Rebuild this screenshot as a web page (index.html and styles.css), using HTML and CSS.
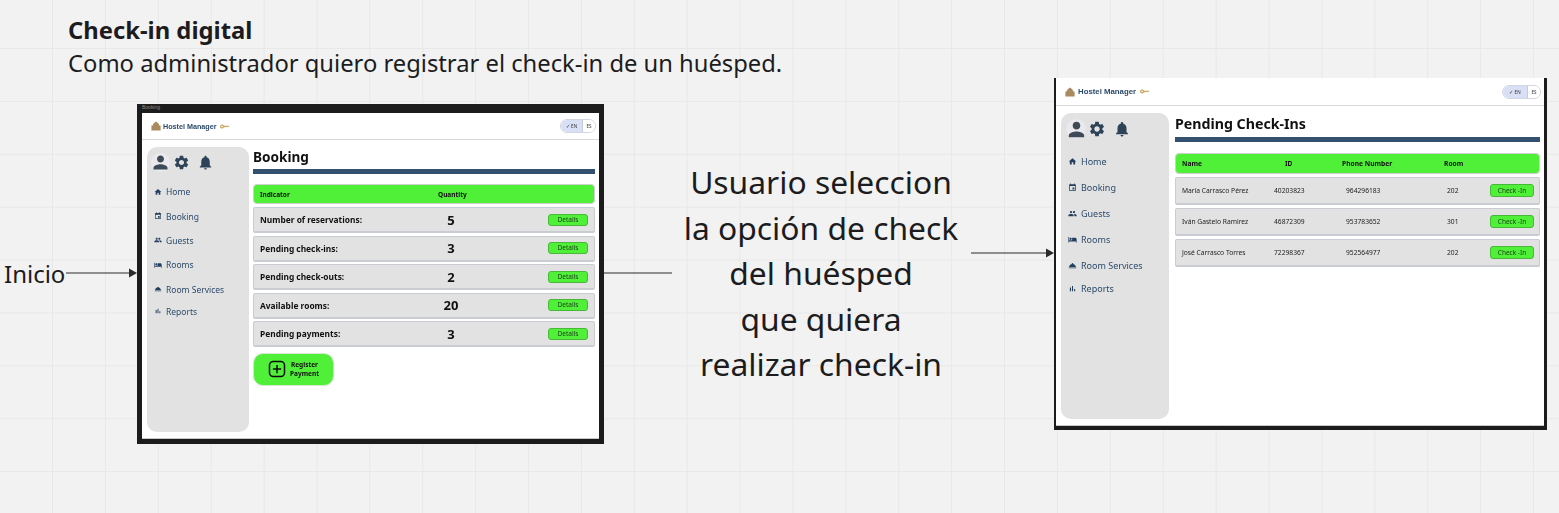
FILE: index.html
```html
<!DOCTYPE html>
<html lang="es">
<head>
    <meta charset="UTF-8">
    <title>Check-in digital</title>
    <link rel="stylesheet" href="styles.css">
</head>
<body>
<svg class="icon-defs" width="0" height="0" aria-hidden="true">
    <symbol id="i-person" viewBox="0 0 24 24"><path d="M12 12c2.21 0 4-1.790 4-4s-1.790-4-4-4-4 1.790-4 4 1.790 4 4 4zm0 2c-2.670 0-8 1.340-8 4v2h16v-2c0-2.660-5.330-4-8-4z"/></symbol>
    <symbol id="i-gear" viewBox="0 0 24 24"><path d="M19.14 12.94c.04-.3.06-.61.06-.94 0-.32-.02-.64-.07-.94l2.03-1.58c.18-.14.23-.41.12-.61l-1.92-3.32c-.12-.22-.37-.29-.59-.22l-2.39.96c-.5-.38-1.03-.7-1.62-.94l-.36-2.54c-.04-.24-.24-.41-.48-.41h-3.84c-.24 0-.43.17-.47.41l-.36 2.54c-.59.24-1.13.57-1.62.94l-2.39-.96c-.22-.08-.47 0-.59.22L2.74 8.87c-.12.21-.08.47.12.61l2.03 1.58c-.05.3-.09.63-.09.94s.02.64.07.94l-2.03 1.58c-.18.14-.23.41-.12.61l1.92 3.32c.12.22.37.29.59.22l2.39-.96c.5.38 1.03.7 1.62.94l.36 2.54c.05.24.24.41.48.41h3.84c.24 0 .44-.17.47-.41l.36-2.54c.59-.24 1.13-.56 1.62-.94l2.39.96c.22.08.47 0 .59-.22l1.92-3.32c.12-.22.07-.47-.12-.61l-2.01-1.58zM12 15.6c-1.98 0-3.6-1.62-3.6-3.6s1.62-3.6 3.6-3.6 3.6 1.62 3.6 3.6-1.62 3.6-3.6 3.6z"/></symbol>
    <symbol id="i-bell" viewBox="0 0 24 24"><path d="M12 22c1.1 0 2-.9 2-2h-4c0 1.1.89 2 2 2zm6-6v-5c0-3.07-1.64-5.64-4.5-6.32V4c0-.83-.67-1.5-1.5-1.5s-1.5.67-1.5 1.5v.68C7.63 5.36 6 7.92 6 11v5l-2 2v1h16v-1l-2-2z"/></symbol>
    <symbol id="i-home" viewBox="0 0 24 24"><path d="M10 20v-6h4v6h5v-8h3L12 3 2 12h3v8z"/></symbol>
    <symbol id="i-event" viewBox="0 0 24 24"><path d="M17 12h-5v5h5v-5zM16 1v2H8V1H6v2H5c-1.11 0-1.99.9-1.99 2L3 19c0 1.1.89 2 2 2h14c1.1 0 2-.9 2-2V5c0-1.1-.9-2-2-2h-1V1h-2zm3 18H5V8h14v11z"/></symbol>
    <symbol id="i-people" viewBox="0 0 24 24"><path d="M16 11c1.66 0 2.99-1.34 2.99-3S17.66 5 16 5c-1.66 0-3 1.34-3 3s1.34 3 3 3zm-8 0c1.66 0 2.99-1.34 2.99-3S9.66 5 8 5C6.34 5 5 6.34 5 8s1.34 3 3 3zm0 2c-2.33 0-7 1.17-7 3.5V19h14v-2.5c0-2.33-4.67-3.5-7-3.5zm8 0c-.29 0-.62.02-.97.05 1.16.84 1.97 1.97 1.97 3.45V19h6v-2.5c0-2.33-4.67-3.5-7-3.5z"/></symbol>
    <symbol id="i-bed" viewBox="0 0 24 24"><path d="M7 13c1.66 0 3-1.34 3-3S8.66 7 7 7s-3 1.34-3 3 1.34 3 3 3zm12-6h-8v7H3V5H1v15h2v-3h18v3h2v-9c0-2.21-1.79-4-4-4z"/></symbol>
    <symbol id="i-service" viewBox="0 0 24 24"><path d="M2 17h20v2H2zm11.84-9.21c.1-.24.16-.51.16-.79 0-1.1-.9-2-2-2s-2 .9-2 2c0 .28.06.55.16.79C6.25 8.6 3.27 11.93 3 16h18c-.27-4.07-3.25-7.4-7.16-8.21z"/></symbol>
    <symbol id="i-bars" viewBox="0 0 24 24"><path d="M5 9.2h3V19H5zM10.6 5h2.8v14h-2.800zm5.600 8H19v6h-2.800z"/></symbol>
    <symbol id="i-house" viewBox="0 0 24 24"><path d="M12 1 6 6 4 11H1v12h22V11h-3l-2-5z"/></symbol>
    <symbol id="i-key" viewBox="0 0 24 12"><path d="M5 1a5 5 0 1 0 4.6 7H13l1.5-1.5L16 8l1.500-1.500L19 8l4-3-1-1H9.600A5 5 0 0 0 5 1zm0 3a2 2 0 1 1 0 4 2 2 0 0 1 0-4z"/></symbol>
</svg>

<main class="board">
    <header class="story">
        <h1>Check-in digital</h1>
        <p>Como administrador quiero registrar el check-in de un huésped.</p>
    </header>

    <span class="start-label">Inicio</span>
    <svg class="arrow arrow-start" width="72" height="12"><path d="M0 6h65"/><polygon points="63,1.500 71,6 63,10.500"/></svg>
    <svg class="arrow arrow-line" width="68" height="12"><path d="M0 6h68"/></svg>
    <svg class="arrow arrow-next" width="84" height="12"><path d="M0 6h77"/><polygon points="75,1.500 83,6 75,10.500"/></svg>

    <p class="step-note">Usuario seleccion<br>la opción de check<br>del huésped<br>que quiera<br>realizar check-in</p>

    <!-- Booking screen -->
    <section class="frame frame-booking">
        <div class="frame-caption">Booking</div>
        <div class="screen">
            <div class="topbar">
                <div class="brand">
                    <svg class="brand-house"><use href="#i-house"/></svg>
                    <span>Hostel Manager</span>
                    <svg class="brand-key"><use href="#i-key"/></svg>
                </div>
                <div class="lang"><span class="lang-on">✓ EN</span><span class="lang-off">ES</span></div>
            </div>
            <div class="screen-body">
                <aside class="sidebar">
                    <div class="side-tools">
                        <span class="avatar"><svg><use href="#i-person"/></svg></span>
                        <svg class="tool-gear"><use href="#i-gear"/></svg>
                        <svg class="tool-bell"><use href="#i-bell"/></svg>
                    </div>
                    <nav class="side-nav">
                        <a><svg><use href="#i-home"/></svg>Home</a>
                        <a><svg><use href="#i-event"/></svg>Booking</a>
                        <a><svg><use href="#i-people"/></svg>Guests</a>
                        <a><svg><use href="#i-bed"/></svg>Rooms</a>
                        <a><svg><use href="#i-service"/></svg>Room Services</a>
                        <a class="nav-last"><svg><use href="#i-bars"/></svg>Reports</a>
                    </nav>
                </aside>
                <div class="content">
                    <h2>Booking</h2>
                    <div class="title-rule"></div>
                    <div class="table-head">
                        <span>Indicator</span>
                        <span class="cell-qty">Quantity</span>
                    </div>
                    <div class="row"><span class="row-name">Number of reservations:</span><span class="row-value">5</span><button class="btn-green">Details</button></div>
                    <div class="row"><span class="row-name">Pending check-ins:</span><span class="row-value">3</span><button class="btn-green">Details</button></div>
                    <div class="row"><span class="row-name">Pending check-outs:</span><span class="row-value">2</span><button class="btn-green">Details</button></div>
                    <div class="row"><span class="row-name">Available rooms:</span><span class="row-value">20</span><button class="btn-green">Details</button></div>
                    <div class="row"><span class="row-name">Pending payments:</span><span class="row-value">3</span><button class="btn-green">Details</button></div>
                    <button class="btn-register">
                        <svg viewBox="0 0 24 24"><rect x="2" y="2" width="20" height="20" rx="5"/><path d="M12 6.500v11M6.500 12h11"/></svg>
                        <span>Register<br>Payment</span>
                    </button>
                </div>
            </div>
        </div>
    </section>

    <!-- Pending check-ins screen -->
    <section class="frame frame-checkin">
        <div class="screen">
            <div class="topbar">
                <div class="brand">
                    <svg class="brand-house"><use href="#i-house"/></svg>
                    <span>Hostel Manager</span>
                    <svg class="brand-key"><use href="#i-key"/></svg>
                </div>
                <div class="lang"><span class="lang-on">✓ EN</span><span class="lang-off">ES</span></div>
            </div>
            <div class="screen-body">
                <aside class="sidebar">
                    <div class="side-tools">
                        <span class="avatar"><svg><use href="#i-person"/></svg></span>
                        <svg class="tool-gear"><use href="#i-gear"/></svg>
                        <svg class="tool-bell"><use href="#i-bell"/></svg>
                    </div>
                    <nav class="side-nav">
                        <a><svg><use href="#i-home"/></svg>Home</a>
                        <a><svg><use href="#i-event"/></svg>Booking</a>
                        <a><svg><use href="#i-people"/></svg>Guests</a>
                        <a><svg><use href="#i-bed"/></svg>Rooms</a>
                        <a><svg><use href="#i-service"/></svg>Room Services</a>
                        <a class="nav-last"><svg><use href="#i-bars"/></svg>Reports</a>
                    </nav>
                </aside>
                <div class="content">
                    <h2>Pending Check-Ins</h2>
                    <div class="title-rule"></div>
                    <div class="table-head head-cols">
                        <span>Name</span><span>ID</span><span>Phone Number</span><span>Room</span>
                    </div>
                    <div class="row guest-cols"><span>María Carrasco Pérez</span><span>40203823</span><span>964296183</span><span>202</span><button class="btn-green">Check -In</button></div>
                    <div class="row guest-cols"><span>Iván Gastelo Ramirez</span><span>46872309</span><span>953783652</span><span>301</span><button class="btn-green">Check -In</button></div>
                    <div class="row guest-cols"><span>José Carrasco Torres</span><span>72298367</span><span>952564977</span><span>202</span><button class="btn-green">Check -In</button></div>
                </div>
            </div>
        </div>
    </section>
</main>
</body>
</html>
```

FILE: styles.css
```css
* {
    box-sizing: border-box;
}

body {
    margin: 0;
    overflow: hidden;
    font-family: "Noto Sans", sans-serif;
    color: #1c1c1e;
    background-color: #f2f2f2;
}

.icon-defs {
    position: absolute;
}

/* Free canvas: everything placed on it sits at its own board position */
.board {
    position: relative;
    width: 1559px;
    height: 513px;
    overflow: hidden;
    background-color: #f2f2f2;
    background-image:
        linear-gradient(to right, #e8e8e8 1px, transparent 1px),
        linear-gradient(to bottom, #e8e8e8 1px, transparent 1px);
    background-size: 52.9px 52.9px;
    background-position: 52px 48px;
}

.story {
    position: absolute;
    left: 68px;
    top: 14px;
}

.story h1 {
    margin: 0;
    font-size: 23.8px;
    line-height: 32px;
    font-weight: 700;
}

.story p {
    margin: 0;
    font-size: 23.76px;
    line-height: 34px;
    white-space: nowrap;
}

.start-label {
    position: absolute;
    left: 4px;
    top: 258px;
    font-size: 24px;
    line-height: 32px;
}

.arrow {
    position: absolute;
}

.arrow path {
    fill: none;
    stroke: #2b2b2b;
    stroke-width: 1.2;
}

.arrow polygon {
    fill: #2b2b2b;
}

.arrow-start {
    left: 66px;
    top: 267px;
}

.arrow-line {
    left: 604px;
    top: 267px;
}

.arrow-next {
    left: 971px;
    top: 247px;
}

.step-note {
    position: absolute;
    left: 671px;
    top: 159px;
    width: 300px;
    margin: 0;
    font-size: 31.8px;
    line-height: 45.6px;
    text-align: center;
}

/* App screenshots */
.frame {
    position: absolute;
    display: flex;
    flex-direction: column;
    background-color: #1c1c1c;
}

.frame-booking {
    left: 137px;
    top: 104px;
    width: 467px;
    height: 340px;
    padding: 0 5px 5px 5px;
}

.frame-checkin {
    left: 1054px;
    top: 78px;
    width: 493px;
    height: 352px;
    padding: 0 3px 4px 2px;
}

.frame-caption {
    height: 9px;
    font-family: "Liberation Sans", sans-serif;
    font-size: 5px;
    line-height: 7px;
    color: #8a8a8a;
}

/* the pasted screens are soft, not crisp */
.screen {
    flex: 1;
    display: flex;
    flex-direction: column;
    background-color: #fff;
    border-bottom: 1px solid #c8c8c8;
    filter: blur(0.3px);
}

.topbar {
    display: flex;
    align-items: center;
    justify-content: space-between;
    height: 27px;
    padding: 0 3px 0 9px;
    border-bottom: 1px solid #d5d8dc;
}

.brand {
    display: flex;
    align-items: center;
    gap: 2px;
    font-family: "Liberation Sans", sans-serif;
    font-size: 7.2px;
    font-weight: 700;
    color: #2c4a6b;
}

.brand-house {
    width: 10px;
    height: 10px;
    fill: #a98a5f;
}

.brand-key {
    width: 10px;
    height: 5px;
    margin-left: 1px;
    fill: #c9a95c;
}

.lang {
    display: flex;
    height: 14px;
    width: 36px;
    border: 1px solid #d2d6e0;
    border-radius: 7px;
    overflow: hidden;
    font-size: 4.5px;
    line-height: 12px;
    color: #333;
}

.lang-on {
    flex: 1;
    text-align: center;
    background-color: #d9e0f5;
    border-right: 1px solid #c6cbd8;
}

.lang-off {
    width: 12px;
    text-align: center;
    background-color: #fff;
}

.screen-body {
    flex: 1;
    display: flex;
    min-height: 0;
}

.sidebar {
    flex: none;
    background-color: #e2e2e2;
    border-radius: 10px;
}

.side-tools {
    display: flex;
    align-items: center;
    fill: #2f4358;
}

.side-tools svg {
    flex: none;
}

.avatar {
    display: flex;
    align-items: center;
    justify-content: center;
    flex: none;
    border-radius: 50%;
    background-color: #e9e9ee;
}

.avatar svg {
    fill: #3f4a58;
}

.side-nav {
    display: flex;
    flex-direction: column;
}

.side-nav a {
    display: flex;
    align-items: center;
    color: #2c4a6b;
}

.side-nav svg {
    flex: none;
    fill: #24405e;
}

.content {
    flex: 1;
    min-width: 0;
    display: flex;
    flex-direction: column;
    align-items: stretch;
}

.content h2 {
    margin: 0;
    font-weight: 700;
    color: #111;
}

.title-rule {
    height: 5px;
    background-color: #34506f;
}

.table-head {
    display: flex;
    align-items: center;
    background-color: #50f038;
    border: 1px solid #d0d0d0;
    border-radius: 4px;
    font-weight: 700;
    color: #111;
}

.row {
    display: flex;
    align-items: center;
    background-color: #e2e2e2;
    border: 1px solid #c9ccd2;
    border-bottom-width: 2px;
    border-radius: 2px;
}

.btn-green {
    padding: 0;
    background-color: #50f038;
    border: 1px solid #48b838;
    border-radius: 3px;
    font-family: "Noto Sans", sans-serif;
    color: #1d3a1d;
}

/* Booking screen sizes */
.frame-booking .screen-body {
    padding: 7px 4px 6px 5px;
    gap: 4px;
}

.frame-booking .sidebar {
    width: 102px;
    padding: 6px 5px 0 4px;
}

.frame-booking .avatar {
    width: 19px;
    height: 19px;
}

.frame-booking .side-tools svg {
    width: 17px;
    height: 17px;
}

.frame-booking .avatar svg {
    width: 21px;
    height: 21px;
}

.frame-booking .tool-gear {
    margin-left: 3px;
}

.frame-booking .tool-bell {
    margin-left: 7px;
}

.frame-booking .side-nav {
    margin-top: 7.5px;
    padding-left: 3px;
}

.frame-booking .side-nav a {
    height: 24.4px;
    gap: 4px;
    font-size: 8.5px;
}

.frame-booking .side-nav a.nav-last {
    height: 20px;
}

.frame-booking .side-nav svg {
    width: 8px;
    height: 8px;
}

.frame-booking h2 {
    font-size: 13.6px;
    line-height: 20px;
    margin-bottom: 2px;
}

.frame-booking .title-rule {
    margin-bottom: 10px;
}

.frame-booking .table-head {
    height: 20px;
    margin-bottom: 3px;
    padding-left: 6px;
    font-size: 6.5px;
}

.frame-booking .table-head span:first-child {
    width: 178px;
}

.frame-booking .row {
    height: 26px;
    margin-bottom: 2.6px;
    padding: 0 6px;
    font-size: 8.4px;
}

.frame-booking .row-name {
    width: 166px;
    font-weight: 700;
    color: #111;
}

.frame-booking .row-value {
    width: 50px;
    text-align: center;
    font-size: 13px;
    font-weight: 700;
    color: #111;
}

.frame-booking .btn-green {
    width: 40px;
    height: 12px;
    margin-left: auto;
    font-size: 6.5px;
    line-height: 10px;
}

.btn-register {
    display: flex;
    align-items: center;
    justify-content: center;
    gap: 4px;
    width: 81px;
    height: 33px;
    margin-top: 3px;
    padding: 0;
    background-color: #50f038;
    border: 1px solid #d4e8d0;
    border-radius: 10px;
    font-family: "Noto Sans", sans-serif;
    font-size: 6.5px;
    line-height: 9px;
    font-weight: 700;
    color: #111;
}

.btn-register svg {
    width: 18px;
    height: 18px;
    fill: none;
    stroke: #0c0c0c;
    stroke-width: 2;
}

/* Check-in screen sizes */
.frame-checkin .topbar {
    height: 28px;
}

.frame-checkin .brand {
    gap: 3px;
    font-size: 7.8px;
}

.frame-checkin .lang {
    width: 39px;
}

.frame-checkin .screen-body {
    padding: 7px 4px 6px 5px;
    gap: 6px;
}

.frame-checkin .sidebar {
    width: 108px;
    padding: 6px 5px 0 5px;
}

.frame-checkin .avatar {
    width: 20px;
    height: 20px;
}

.frame-checkin .side-tools svg {
    width: 18px;
    height: 18px;
}

.frame-checkin .avatar svg {
    width: 23px;
    height: 23px;
}

.frame-checkin .tool-gear {
    margin-left: 2px;
}

.frame-checkin .tool-bell {
    margin-left: 7px;
}

.frame-checkin .side-nav {
    margin-top: 9px;
    padding-left: 2px;
}

.frame-checkin .side-nav a {
    height: 26px;
    gap: 4px;
    font-size: 9px;
}

.frame-checkin .side-nav a.nav-last {
    height: 20px;
}

.frame-checkin .side-nav svg {
    width: 9px;
    height: 9px;
}

.frame-checkin h2 {
    font-size: 14.2px;
    line-height: 21px;
    margin-bottom: 3px;
}

.frame-checkin .title-rule {
    margin-bottom: 11px;
}

.frame-checkin .table-head {
    height: 21px;
    margin-bottom: 3px;
    font-size: 6.7px;
}

.frame-checkin .row {
    height: 28px;
    margin-bottom: 3px;
    font-size: 6.7px;
    color: #222;
}

.head-cols {
    display: grid;
    grid-template-columns: 103px 57px 102px 1fr;
    padding-left: 6px;
}

.guest-cols {
    display: grid;
    grid-template-columns: 92px 72px 101px 43px 1fr;
    align-items: center;
    padding-left: 6px;
}

.frame-checkin .btn-green {
    justify-self: end;
    width: 44px;
    height: 13px;
    margin-right: 6px;
    font-size: 6.5px;
    line-height: 11px;
}
```
